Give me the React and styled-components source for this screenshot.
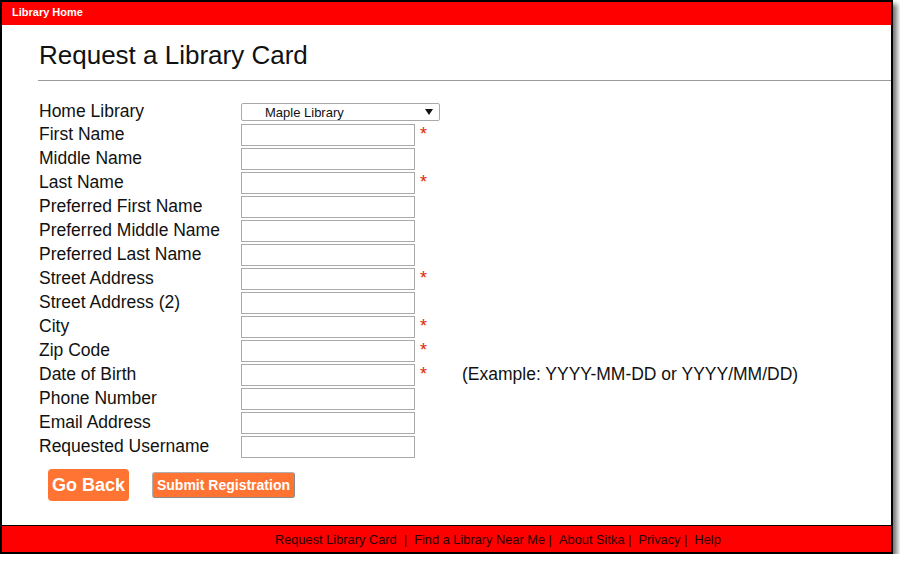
import React from "react";
import styled, { createGlobalStyle } from "styled-components";

const Global = createGlobalStyle`
  html, body { margin: 0; padding: 0; background: #fff; }
  body { font-family: Arial, "Liberation Sans", sans-serif; color: #111; }
`;

const Window = styled.div`
  box-sizing: border-box;
  width: 893px;
  height: 554px;
  border: 2px solid #000;
  background: #fff;
  box-shadow: 4px 4px 5px rgba(0, 0, 0, 0.55);
  display: flex;
  flex-direction: column;
  overflow: hidden;
`;

const TopBar = styled.div`
  height: 23px;
  background: #ff0000;
  display: flex;
  align-items: center;
  padding-left: 10px;
  flex: none;
`;

const TopLink = styled.a`
  color: #fff;
  font-weight: bold;
  font-size: 11px;
  text-decoration: none;
  margin-top: -3px;
`;

const Main = styled.div`
  flex: 1;
  padding-left: 36px;
`;

const Title = styled.h1`
  margin: 15px 0 0 1px;
  font-size: 26px;
  line-height: 30px;
  font-weight: normal;
  color: #111;
`;

const Rule = styled.div`
  height: 1px;
  background: #9a9a9a;
  margin-top: 10px;
`;

const Form = styled.div`
  margin-top: 22px;
  display: flex;
  flex-direction: column;
`;

const Row = styled.div`
  display: grid;
  grid-template-columns: 203px auto auto 1fr;
  align-items: start;
  height: ${(p) => p.$h || 24}px;
`;

const Label = styled.div`
  font-size: 17.5px;
  line-height: 18px;
  padding-left: 1px;
  margin-top: ${(p) => p.$mt ?? 1}px;
  white-space: nowrap;
`;

const Input = styled.div`
  box-sizing: border-box;
  width: 174px;
  height: 22px;
  border: 1px solid #a9a9a9;
  background: #fff;
`;

const Select = styled.div`
  box-sizing: border-box;
  width: 199px;
  height: 18px;
  border: 1px solid #a9a9a9;
  border-radius: 2px;
  background: #fff;
  display: flex;
  align-items: center;
  justify-content: space-between;
  padding: 0 6px 0 23px;
  font-size: 13px;
  color: #111;
`;

const Req = styled.span`
  color: #e02a00;
  font-size: 18px;
  line-height: 18px;
  margin-left: 5px;
  margin-top: 1px;
  width: 10px;
`;

const Note = styled.span`
  font-size: 17.5px;
  line-height: 18px;
  margin-top: 1px;
  margin-left: 32px;
  white-space: nowrap;
  color: #111;
`;

const Buttons = styled.div`
  display: flex;
  align-items: center;
  gap: 23px;
  margin-top: 9px;
  padding-left: 10px;
`;

const GoBack = styled.button`
  box-sizing: border-box;
  width: 81px;
  height: 32px;
  border: none;
  border-radius: 4px;
  background: #ff7433;
  color: #fff;
  font-family: Arial, "Liberation Sans", sans-serif;
  font-weight: bold;
  font-size: 18px;
  padding: 0;
`;

const Submit = styled.button`
  box-sizing: border-box;
  width: 143px;
  height: 26px;
  border: 1px solid #b0b0b0;
  border-right-color: #8a8a8a;
  border-bottom-color: #8a8a8a;
  border-radius: 3px;
  background: #ff7433;
  color: #fff;
  font-family: Arial, "Liberation Sans", sans-serif;
  font-weight: bold;
  font-size: 14px;
  padding: 0;
`;

const Footer = styled.div`
  flex: none;
  height: 26px;
  border-top: 1px solid #000;
  background: #ff0000;
  display: flex;
  align-items: center;
  padding-left: 273px;
  font-size: 12.8px;
  color: #2a0000;
  white-space: pre;
`;

const FootLink = styled.a`
  color: #2a0000;
  text-decoration: none;
`;

const fields = [
  ["First Name", true],
  ["Middle Name", false],
  ["Last Name", true],
  ["Preferred First Name", false],
  ["Preferred Middle Name", false],
  ["Preferred Last Name", false],
  ["Street Address", true],
  ["Street Address (2)", false],
  ["City", true],
  ["Zip Code", true],
  ["Date of Birth", true, "(Example: YYYY-MM-DD or YYYY/MM/DD)"],
  ["Phone Number", false],
  ["Email Address", false],
  ["Requested Username", false],
];

export default function App() {
  return (
    <>
      <Global />
      <Window>
        <TopBar>
          <TopLink href="#">Library Home</TopLink>
        </TopBar>
        <Main>
          <Title>Request a Library Card</Title>
          <Rule />
          <Form>
            <Row $h={21}>
              <Label $mt={-1}>Home Library</Label>
              <Select>
                <span>Maple Library</span>
                <svg width="8" height="6" viewBox="0 0 8 6">
                  <path d="M0 0 H8 L4 6 Z" fill="#111" />
                </svg>
              </Select>
            </Row>
            {fields.map(([name, req, note]) => (
              <Row key={name}>
                <Label>{name}</Label>
                <Input />
                <Req>{req ? "*" : ""}</Req>
                {note ? <Note>{note}</Note> : <span />}
              </Row>
            ))}
          </Form>
          <Buttons>
            <GoBack>Go Back</GoBack>
            <Submit>Submit Registration</Submit>
          </Buttons>
        </Main>
        <Footer>
          <FootLink href="#">Request Library Card</FootLink>
          {"  |  "}
          <FootLink href="#">Find a Library Near Me</FootLink>
          {" |  "}
          <FootLink href="#">About Sitka</FootLink>
          {" |  "}
          <FootLink href="#">Privacy</FootLink>
          {" |  "}
          <FootLink href="#">Help</FootLink>
        </Footer>
      </Window>
    </>
  );
}
